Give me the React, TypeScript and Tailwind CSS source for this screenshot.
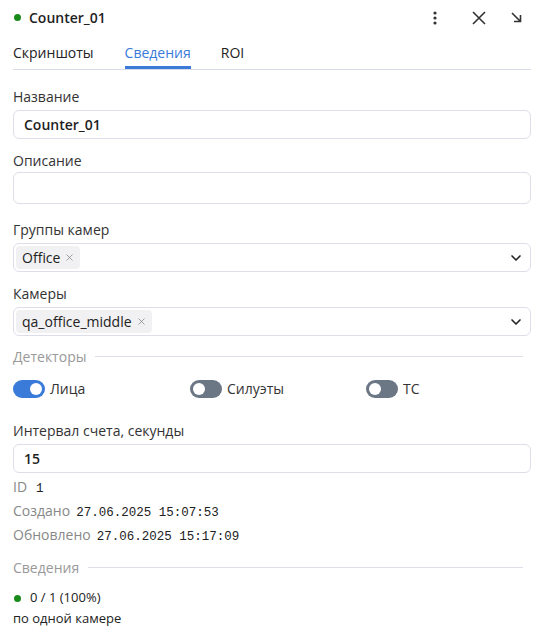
import { ChevronDown, X } from 'lucide-react'

function Label({ text, medium }: { text: string; medium?: boolean }) {
  return <div className={`text-[14px] leading-[20px] text-[#333] ${medium ? 'font-medium' : ''}`}>{text}</div>
}

function Input({ value, tall }: { value?: string; tall?: boolean }) {
  return (
    <div className={`${tall ? 'mt-[1px] h-[32px]' : 'mt-[3px] h-[29px]'} rounded-[6px] border border-[#dcdfea] px-[10px] flex items-center text-[14px] font-semibold text-[#1f1f1f]`}>
      {value}
    </div>
  )
}

function Select({ chip }: { chip: string }) {
  return (
    <div className="mt-[3px] h-[29px] rounded-[6px] border border-[#dcdfea] pl-[2px] pr-[6px] flex items-center justify-between">
      <span className="h-[23px] rounded-[4px] bg-[#f1f1f3] pl-[6px] pr-[5px] flex items-center gap-[4px] text-[14px] text-[#222]">
        {chip}
        <X className="w-[11px] h-[11px] text-[#777]" strokeWidth={1.5} />
      </span>
      <ChevronDown className="w-[16px] h-[16px] text-[#222]" strokeWidth={2.5} />
    </div>
  )
}

function Toggle({ on, label }: { on?: boolean; label: string }) {
  return (
    <div className="flex items-center gap-[5px]">
      <div className={`w-[32px] h-[18px] rounded-full p-[3px] flex ${on ? 'bg-[#3a7bd9] justify-end' : 'bg-[#6b7785] justify-start'}`}>
        <div className="w-[12px] h-[12px] rounded-full bg-white" />
      </div>
      <span className="text-[14px] text-[#333]">{label}</span>
    </div>
  )
}

function Divider({ label }: { label: string }) {
  return (
    <div className="flex items-center gap-[9px] pr-[8px] h-[20px]">
      <span className="text-[14px] text-[#999]">{label}</span>
      <div className="flex-1 h-px bg-[#dcdfea]" />
    </div>
  )
}

function Info({ label, value, gap }: { label: string; value: string; gap: string }) {
  return (
    <div className="h-[24px] flex items-center">
      <div className="flex items-baseline">
        <span className="text-[14px] leading-[20px] text-[#888]">{label}</span>
        <span className={`${gap} font-['Liberation_Mono',monospace] text-[12.5px] leading-[20px] text-[#222]`}>{value}</span>
      </div>
    </div>
  )
}

export default function App() {
  return (
    <div className="w-[549px] h-[641px] bg-white pl-[13px] pr-[18px] font-['Open_Sans',sans-serif] text-[#222]">
      <div className="h-[35px] flex items-center">
        <span className="w-[7px] h-[7px] rounded-full bg-[#1a8a1a] ml-[1px]" />
        <span className="ml-[8px] text-[14px] font-semibold text-[#1f1f1f]">Counter_01</span>
        <div className="ml-auto mr-[9px] flex items-center">
          <svg width="6" height="14" viewBox="0 0 6 14" className="text-[#333]">
            <circle cx="3" cy="2" r="1.6" fill="currentColor" />
            <circle cx="3" cy="7" r="1.6" fill="currentColor" />
            <circle cx="3" cy="12" r="1.6" fill="currentColor" />
          </svg>
          <svg width="14" height="14" viewBox="0 0 14 14" className="ml-[34px] text-[#333]">
            <path d="M1 1 L13 13 M13 1 L1 13" stroke="currentColor" strokeWidth="1.6" fill="none" />
          </svg>
          <svg width="11" height="11" viewBox="0 0 11 11" className="ml-[25px] text-[#333]">
            <path d="M1 1 L9.5 9.5 M9.5 3 V9.5 H3" stroke="currentColor" strokeWidth="1.6" fill="none" />
          </svg>
        </div>
      </div>
      <div className="flex border-b border-[#d8dbe8] h-[35px] text-[14px] font-medium">
        <div className="flex items-center">Скриншоты</div>
        <div className="ml-[31px] flex items-center text-[#3a7bd9] border-b-[3px] border-[#3a7bd9] pt-[3px]">Сведения</div>
        <div className="ml-[30px] flex items-center">ROI</div>
      </div>

      <div className="mt-[17px]">
        <Label text="Название" />
        <Input value="Counter_01" />
      </div>
      <div className="mt-[12px]">
        <Label text="Описание" medium />
        <Input tall />
      </div>
      <div className="mt-[16px]">
        <Label text="Группы камер" />
        <Select chip="Office" />
      </div>
      <div className="mt-[12px]">
        <Label text="Камеры" />
        <Select chip="qa_office_middle" />
      </div>
      <div className="mt-[10px]">
        <Divider label="Детекторы" />
      </div>
      <div className="mt-[12px] grid grid-cols-[177px_176px_1fr]">
        <Toggle on label="Лица" />
        <Toggle label="Силуэты" />
        <Toggle label="ТС" />
      </div>
      <div className="mt-[22px]">
        <Label text="Интервал счета, секунды" />
        <Input value="15" />
      </div>
      <div className="mt-[3px] flex flex-col">
        <Info label="ID" value="1" gap="ml-[9px]" />
        <Info label="Создано" value="27.06.2025 15:07:53" gap="ml-[6px]" />
        <Info label="Обновлено" value="27.06.2025 15:17:09" gap="ml-[6px]" />
      </div>
      <div className="mt-[9px]">
        <Divider label="Сведения" />
      </div>
      <div className="mt-[12px] h-[18px] flex items-center text-[13px]">
        <span className="w-[7px] h-[7px] rounded-full bg-[#1a8a1a] ml-[1px]" />
        <span className="ml-[9px]">0 / 1 (100%)</span>
      </div>
      <div className="mt-[2px] text-[13px] leading-[18px]">по одной камере</div>
    </div>
  )
}
